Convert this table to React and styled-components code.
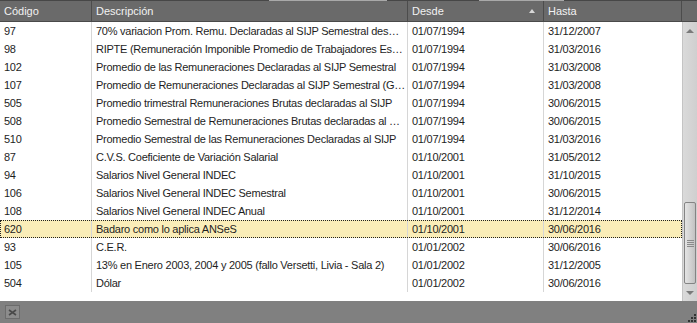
import React from "react";
import styled, { createGlobalStyle } from "styled-components";

const Global = createGlobalStyle`
  html, body { margin: 0; padding: 0; background: #ffffff; }
  body { font-family: "Liberation Sans", Arial, sans-serif; }
`;

const COLS = "92px 316px 136px 138px 15px";

const Frame = styled.div`
  width: 697px;
  height: 323px;
  display: flex;
  flex-direction: column;
  overflow: hidden;
  font-family: "Liberation Sans", Arial, sans-serif;
  font-size: 11px;
`;

const TopStrip = styled.div`
  height: 1px;
  display: grid;
  grid-template-columns: 269px 118px 92px 85px 1fr;
  background: #474747;
`;

const StripSeg = styled.div`
  background: ${(p) => (p.$light ? "#a9a9a9" : "#474747")};
`;

const Header = styled.div`
  height: 20px;
  display: grid;
  grid-template-columns: ${COLS};
  background: #6a6a6a;
  border-bottom: 1px solid #4a4a4a;
`;

const HeadCell = styled.div`
  position: relative;
  display: flex;
  align-items: center;
  padding-left: 4px;
  color: #f2f2f2;
  border-right: 1px solid #4c4c4c;
  box-sizing: border-box;
  white-space: nowrap;
  &:last-child { border-right: none; }
`;

const SortArrow = styled.span`
  position: absolute;
  right: 8px;
  top: 8px;
  width: 0;
  height: 0;
  border-left: 3.5px solid transparent;
  border-right: 3.5px solid transparent;
  border-bottom: 4px solid #d8d8d8;
`;

const Body = styled.div`
  flex: 1;
  display: grid;
  grid-template-columns: 1fr 15px;
  min-height: 0;
`;

const Rows = styled.div`
  background: #ffffff;
  display: flex;
  flex-direction: column;
`;

const Row = styled.div`
  height: 18px;
  display: grid;
  grid-template-columns: 92px 316px 136px 138px;
  box-sizing: border-box;
  background: ${(p) => (p.$sel ? "#faedb8" : "transparent")};
  outline: ${(p) => (p.$sel ? "1px dotted #222" : "none")};
  outline-offset: -1px;
`;

const Cell = styled.div`
  display: flex;
  align-items: center;
  padding-left: 4px;
  padding-right: 1px;
  color: #1e1e1e;
  border-right: ${(p) => (p.$last ? "none" : "1px solid #d6d6d6")};
  white-space: nowrap;
  overflow: hidden;
  box-sizing: border-box;
  letter-spacing: -0.25px;
`;

const Scrollbar = styled.div`
  display: flex;
  flex-direction: column;
  align-items: center;
  background: linear-gradient(to right, #dadada, #cfcfcf);
  border-left: 1px solid #c4c4c4;
  box-sizing: border-box;
`;

const ArrowBtn = styled.div`
  height: 17px;
  width: 100%;
  display: flex;
  align-items: center;
  justify-content: center;
`;

const TriUp = styled.span`
  width: 0;
  height: 0;
  border-left: 4px solid transparent;
  border-right: 4px solid transparent;
  border-bottom: 4px solid #7a7a7a;
`;

const TriDown = styled.span`
  width: 0;
  height: 0;
  border-left: 4px solid transparent;
  border-right: 4px solid transparent;
  border-top: 4px solid #7a7a7a;
`;

const Track = styled.div`
  flex: 1;
  width: 100%;
  display: flex;
  flex-direction: column;
  justify-content: flex-end;
  padding-bottom: 0px;
  box-sizing: border-box;
`;

const Thumb = styled.div`
  height: 82px;
  margin: 0 1px;
  border: 1px solid #848484;
  border-radius: 2px;
  background: linear-gradient(to right, #e4e4e4, #d0d0d0 60%, #c2c2c2);
  display: flex;
  align-items: center;
  justify-content: center;
  box-sizing: border-box;
`;

const Grip = styled.div`
  width: 7px;
  height: 7px;
  background: repeating-linear-gradient(
    to bottom,
    #8a8a8a 0px,
    #8a8a8a 1px,
    transparent 1px,
    transparent 2px
  );
`;

const Footer = styled.div`
  height: 22px;
  background: #808080;
  display: flex;
  align-items: center;
  justify-content: space-between;
  padding: 0 1px 0 5px;
  box-sizing: border-box;
`;

const CloseBtn = styled.div`
  width: 15px;
  height: 14px;
  box-sizing: border-box;
  border: 1px solid #6c6c6c;
  background: #8c8c8c;
  display: flex;
  align-items: center;
  justify-content: center;
`;

const ResizeGrip = styled.svg`
  align-self: flex-end;
  margin-bottom: 1px;
`;

const data = [
  ["97", "70% variacion Prom. Remu. Declaradas al SIJP Semestral des…", "01/07/1994", "31/12/2007"],
  ["98", "RIPTE (Remuneración Imponible Promedio de Trabajadores Es…", "01/07/1994", "31/03/2016"],
  ["102", "Promedio de las Remuneraciones Declaradas al SIJP Semestral", "01/07/1994", "31/03/2008"],
  ["107", "Promedio de Remuneraciones Declaradas al SIJP Semestral (G…", "01/07/1994", "31/03/2008"],
  ["505", "Promedio trimestral Remuneraciones Brutas declaradas al SIJP", "01/07/1994", "30/06/2015"],
  ["508", "Promedio Semestral de Remuneraciones Brutas declaradas al …", "01/07/1994", "30/06/2015"],
  ["510", "Promedio Semestral de las Remuneraciones Declaradas al SIJP", "01/07/1994", "31/03/2016"],
  ["87", "C.V.S. Coeficiente de Variación Salarial", "01/10/2001", "31/05/2012"],
  ["94", "Salarios Nivel General INDEC", "01/10/2001", "31/10/2015"],
  ["106", "Salarios Nivel General INDEC Semestral", "01/10/2001", "30/06/2015"],
  ["108", "Salarios Nivel General INDEC Anual", "01/10/2001", "31/12/2014"],
  ["620", "Badaro como lo aplica ANSeS", "01/10/2001", "30/06/2016"],
  ["93", "C.E.R.", "01/01/2002", "30/06/2016"],
  ["105", "13% en Enero 2003, 2004 y 2005 (fallo Versetti, Livia - Sala 2)", "01/01/2002", "31/12/2005"],
  ["504", "Dólar", "01/01/2002", "30/06/2016"],
];

export default function App() {
  return (
    <>
      <Global />
      <Frame>
        <TopStrip>
          <StripSeg />
          <StripSeg $light />
          <StripSeg />
          <StripSeg $light />
          <StripSeg />
        </TopStrip>
        <Header>
          <HeadCell>Código</HeadCell>
          <HeadCell>Descripción</HeadCell>
          <HeadCell>
            Desde
            <SortArrow />
          </HeadCell>
          <HeadCell>Hasta</HeadCell>
          <HeadCell />
        </Header>
        <Body>
          <Rows>
            {data.map((r) => (
              <Row key={r[0]} $sel={r[0] === "620"}>
                <Cell>{r[0]}</Cell>
                <Cell>{r[1]}</Cell>
                <Cell>{r[2]}</Cell>
                <Cell $last>{r[3]}</Cell>
              </Row>
            ))}
          </Rows>
          <Scrollbar>
            <ArrowBtn>
              <TriUp />
            </ArrowBtn>
            <Track>
              <Thumb>
                <Grip />
              </Thumb>
            </Track>
            <ArrowBtn>
              <TriDown />
            </ArrowBtn>
          </Scrollbar>
        </Body>
        <Footer>
          <CloseBtn>
            <svg width="9" height="7" viewBox="0 0 9 7">
              <path d="M1 1 L8 6 M8 1 L1 6" stroke="#4a4a4a" strokeWidth="1.6" />
            </svg>
          </CloseBtn>
          <ResizeGrip width="9" height="9" viewBox="0 0 9 9">
            <rect x="7" y="1" width="2" height="2" fill="#333" />
            <rect x="4" y="4" width="2" height="2" fill="#333" />
            <rect x="7" y="4" width="2" height="2" fill="#333" />
            <rect x="1" y="7" width="2" height="2" fill="#333" />
            <rect x="4" y="7" width="2" height="2" fill="#333" />
            <rect x="7" y="7" width="2" height="2" fill="#333" />
          </ResizeGrip>
        </Footer>
      </Frame>
    </>
  );
}
